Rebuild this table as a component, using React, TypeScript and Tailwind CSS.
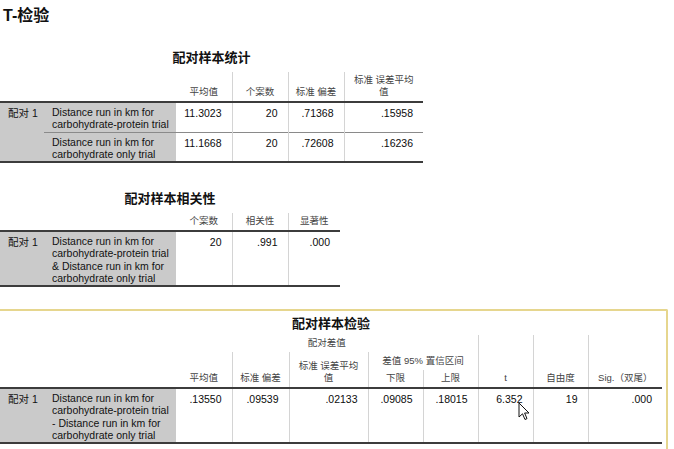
import React from "react";

const F = { fontFamily: '"Liberation Sans", Arial, "Noto Sans CJK SC", sans-serif' };

const lab = "text-[10.5px] leading-[12.3px] text-[#111] bg-[#cacaca] align-top text-left p-0";
const hd = "text-[9.5px] leading-[12px] text-[#444] font-normal align-bottom text-center p-0 pb-[3px]";
const num = "text-[10.5px] leading-[12px] text-[#0c0c0c] align-top text-right p-0 pt-[4px] pr-[10px]";
const vl = "border-l border-l-[#d4d4d4]";

function Cursor() {
  return (
    <svg className="absolute left-[518px] top-[402px]" width="12" height="19" viewBox="0 0 12 19">
      <path d="M1 1 L1 15 L4.5 11.8 L7 17.5 L9 16.6 L6.6 11 L11 11 Z" fill="#fff" stroke="#111" strokeWidth="1" strokeLinejoin="round" />
    </svg>
  );
}

export default function App() {
  return (
    <div className="relative w-[674px] h-[449px] bg-white overflow-hidden" style={F}>
      <div className="pl-[3px] pt-[6px] h-[26px] text-[16px] leading-[20px] font-bold text-[#111]">T-检验</div>

      {/* Table 1 */}
      <div className="w-[423px] mt-[24px] text-center text-[13px] leading-[16px] font-bold text-[#111]">配对样本统计</div>
      <table className="table-fixed border-collapse w-[423px] mt-[6px]">
        <colgroup>
          <col className="w-[44px]" />
          <col className="w-[132px]" />
          <col className="w-[56px]" />
          <col className="w-[56px]" />
          <col className="w-[56px]" />
          <col className="w-[79px]" />
        </colgroup>
        <thead>
          <tr className="h-[30px]">
            <th colSpan={2} className="p-0"></th>
            <th className={hd}>平均值</th>
            <th className={`${hd} ${vl}`}>个案数</th>
            <th className={`${hd} ${vl}`}>标准 偏差</th>
            <th className={`${hd} ${vl}`}>标准 误差平均<br />值</th>
          </tr>
        </thead>
        <tbody>
          <tr className="h-[30px]">
            <td rowSpan={2} className={`${lab} border-t-2 border-t-[#3c3c3c] border-b-2 border-b-[#3c3c3c] pl-[8px] pt-[4px]`}>配对 1</td>
            <td className={`${lab} border-t-2 border-t-[#3c3c3c] pl-[8px] pt-[3px]`}>Distance run in km for<br />carbohydrate-protein trial</td>
            <td className={`${num} border-t-2 border-t-[#3c3c3c]`}>11.3023</td>
            <td className={`${num} ${vl} border-t-2 border-t-[#3c3c3c]`}>20</td>
            <td className={`${num} ${vl} border-t-2 border-t-[#3c3c3c]`}>.71368</td>
            <td className={`${num} ${vl} border-t-2 border-t-[#3c3c3c]`}>.15958</td>
          </tr>
          <tr className="h-[30px]">
            <td className={`${lab} border-t border-t-[#8a8a8a] border-b-2 border-b-[#3c3c3c] pl-[8px] pt-[3px]`}>Distance run in km for<br />carbohydrate only trial</td>
            <td className={`${num} border-t border-t-[#8a8a8a] border-b-2 border-b-[#3c3c3c]`}>11.1668</td>
            <td className={`${num} ${vl} border-t border-t-[#8a8a8a] border-b-2 border-b-[#3c3c3c]`}>20</td>
            <td className={`${num} ${vl} border-t border-t-[#8a8a8a] border-b-2 border-b-[#3c3c3c]`}>.72608</td>
            <td className={`${num} ${vl} border-t border-t-[#8a8a8a] border-b-2 border-b-[#3c3c3c]`}>.16236</td>
          </tr>
        </tbody>
      </table>

      {/* Table 2 */}
      <div className="w-[340px] mt-[28px] text-center text-[13px] leading-[16px] font-bold text-[#111]">配对样本相关性</div>
      <table className="table-fixed border-collapse w-[340px] mt-[6px]">
        <colgroup>
          <col className="w-[44px]" />
          <col className="w-[132px]" />
          <col className="w-[56px]" />
          <col className="w-[56px]" />
          <col className="w-[52px]" />
        </colgroup>
        <thead>
          <tr className="h-[18px]">
            <th colSpan={2} className="p-0"></th>
            <th className={hd}>个案数</th>
            <th className={`${hd} ${vl}`}>相关性</th>
            <th className={`${hd} ${vl}`}>显著性</th>
          </tr>
        </thead>
        <tbody>
          <tr className="h-[55px]">
            <td className={`${lab} border-y-2 border-y-[#3c3c3c] pl-[8px] pt-[4px]`}>配对 1</td>
            <td className={`${lab} border-y-2 border-y-[#3c3c3c] pl-[8px] pt-[3px]`}>Distance run in km for<br />carbohydrate-protein trial<br />&amp; Distance run in km for<br />carbohydrate only trial</td>
            <td className={`${num} border-y-2 border-y-[#3c3c3c]`}>20</td>
            <td className={`${num} ${vl} border-y-2 border-y-[#3c3c3c]`}>.991</td>
            <td className={`${num} ${vl} border-y-2 border-y-[#3c3c3c]`}>.000</td>
          </tr>
        </tbody>
      </table>

      {/* Table 3 */}
      <div className="mt-[22px] w-[668px] h-[200px] border-t-2 border-r-2 border-[#e6d68e] rounded-tr-[2px]">
        <div className="w-[662px] mt-[5px] text-center text-[13px] leading-[16px] font-bold text-[#111]">配对样本检验</div>
        <table className="table-fixed border-collapse w-[662px] mt-[3px]">
          <colgroup>
            <col className="w-[44px]" />
            <col className="w-[132px]" />
            <col className="w-[56px]" />
            <col className="w-[57px]" />
            <col className="w-[79px]" />
            <col className="w-[55px]" />
            <col className="w-[55px]" />
            <col className="w-[55px]" />
            <col className="w-[55px]" />
            <col className="w-[74px]" />
          </colgroup>
          <thead>
            <tr className="h-[17px]">
              <th colSpan={2} rowSpan={3} className="p-0"></th>
              <th colSpan={5} className={`${hd} pb-0`}>配对差值</th>
              <th rowSpan={3} className={`${hd} ${vl}`}>t</th>
              <th rowSpan={3} className={`${hd} ${vl}`}>自由度</th>
              <th rowSpan={3} className={`${hd} ${vl}`}>Sig.（双尾）</th>
            </tr>
            <tr className="h-[18px]">
              <th rowSpan={2} className={hd}>平均值</th>
              <th rowSpan={2} className={`${hd} ${vl}`}>标准 偏差</th>
              <th rowSpan={2} className={`${hd} ${vl}`}>标准 误差平均<br />值</th>
              <th colSpan={2} className={`${hd} ${vl} pb-[2px]`}>差值 95% 置信区间</th>
            </tr>
            <tr className="h-[18px]">
              <th className={`${hd} ${vl}`}>下限</th>
              <th className={`${hd} ${vl}`}>上限</th>
            </tr>
          </thead>
          <tbody>
            <tr className="h-[55px]">
              <td className={`${lab} border-y-2 border-y-[#3c3c3c] pl-[8px] pt-[4px]`}>配对 1</td>
              <td className={`${lab} border-y-2 border-y-[#3c3c3c] pl-[8px] pt-[3px]`}>Distance run in km for<br />carbohydrate-protein trial<br />- Distance run in km for<br />carbohydrate only trial</td>
              <td className={`${num} border-y-2 border-y-[#3c3c3c]`}>.13550</td>
              <td className={`${num} ${vl} border-y-2 border-y-[#3c3c3c]`}>.09539</td>
              <td className={`${num} ${vl} border-y-2 border-y-[#3c3c3c]`}>.02133</td>
              <td className={`${num} ${vl} border-y-2 border-y-[#3c3c3c]`}>.09085</td>
              <td className={`${num} ${vl} border-y-2 border-y-[#3c3c3c]`}>.18015</td>
              <td className={`${num} ${vl} border-y-2 border-y-[#3c3c3c]`}>6.352</td>
              <td className={`${num} ${vl} border-y-2 border-y-[#3c3c3c]`}>19</td>
              <td className={`${num} ${vl} border-y-2 border-y-[#3c3c3c]`}>.000</td>
            </tr>
          </tbody>
        </table>
      </div>
      <Cursor />
    </div>
  );
}
